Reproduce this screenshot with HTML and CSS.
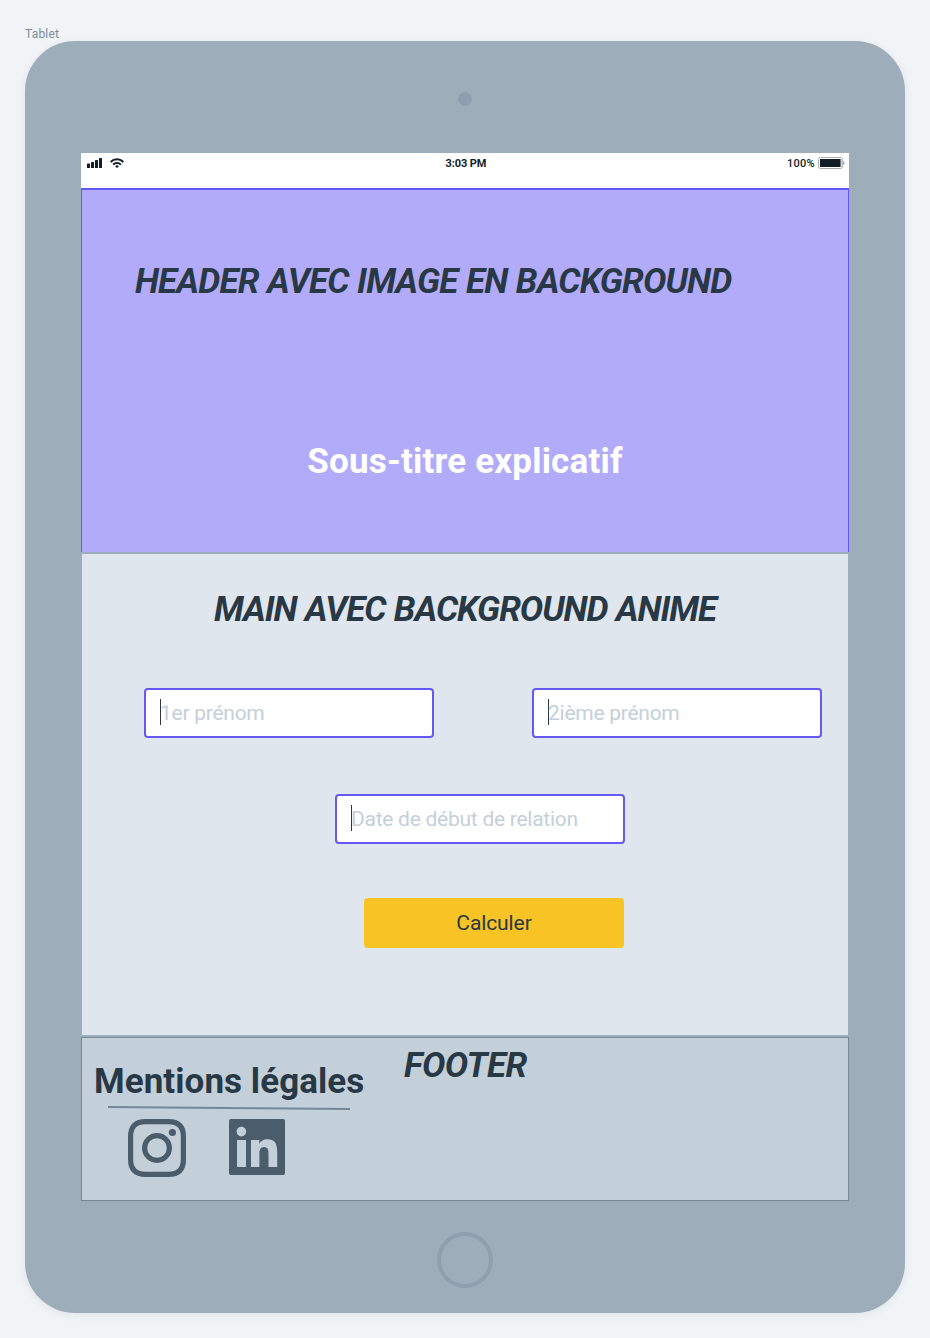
FILE: index.html
```html
<!DOCTYPE html>
<html lang="fr">
<head>
<meta charset="utf-8">
<title>Tablet</title>
<link rel="stylesheet" href="styles.css">
</head>
<body>
<div class="frame-label">Tablet</div>
<div class="tablet">
  <div class="bezel-top"><span class="camera"></span></div>
  <div class="screen">
    <div class="status">
      <div class="status-left">
        <svg width="16" height="10" viewBox="0 0 16 10" fill="#121c24"><rect x="0" y="5.5" width="3" height="4.5" rx=".6"/><rect x="4" y="4" width="3" height="6" rx=".6"/><rect x="8" y="2" width="3" height="8" rx=".6"/><rect x="12" y="0" width="3" height="10" rx=".6"/></svg>
        <svg class="wifi" width="14" height="10" viewBox="0 0 14 10" fill="none" stroke="#121c24" stroke-width="2"><path d="M.7 4a8.6 8.6 0 0 1 12.6 0"/><path d="M3.1 6.6a5.4 5.4 0 0 1 7.8 0"/><path d="M7 10 5.1 8.2a2.8 2.8 0 0 1 3.8 0z" fill="#121c24" stroke="none"/></svg>
      </div>
      <span class="time">3:03 PM</span>
      <div class="status-right">
        <span class="percent">100%</span>
        <svg width="27" height="12" viewBox="0 0 27 12"><rect x=".5" y=".5" width="24" height="11" rx="2" fill="#fff" stroke="#a9adb0"/><rect x="2" y="2" width="20.6" height="8" fill="#121c24"/><path d="M23.2 1.5h1.2v9h-1.2z" fill="#cfd1d2"/><path d="M25 3.7q1.7.8 1.7 2.3T25 8.3z" fill="#a9adb0"/></svg>
      </div>
    </div>
    <header class="hero">
      <h1 class="title hero-title">HEADER AVEC IMAGE EN BACKGROUND</h1>
      <p class="subtitle">Sous-titre explicatif</p>
    </header>
    <main class="main">
      <h2 class="title main-title">MAIN AVEC BACKGROUND ANIME</h2>
      <form class="form">
        <div class="names">
          <label class="field"><span class="caret"></span><input class="input" type="text" placeholder="1er prénom"></label>
          <label class="field"><span class="caret"></span><input class="input" type="text" placeholder="2ième prénom"></label>
        </div>
        <label class="field date"><span class="caret"></span><input class="input" type="text" placeholder="Date de début de relation"></label>
        <button class="button" type="button">Calculer</button>
      </form>
    </main>
    <footer class="footer">
      <div class="legal">
        <p class="legal-title">Mentions légales</p>
        <svg class="rule" width="242" height="4" viewBox="0 0 242 4"><path d="M0 1 242 3" stroke="#758897" stroke-width="2"/></svg>
        <div class="social">
          <svg width="58" height="58" viewBox="0 0 58 58" fill="none" stroke="#4b5d6b"><path d="M17.5 2.6h23C50.500 2.600 55.400 7.500 55.400 17.500v23c0 10-4.900 14.900-14.900 14.900h-23c-10 0-14.900-4.900-14.900-14.900v-23C2.600 7.500 7.500 2.600 17.500 2.600z" stroke-width="5.200"/><circle cx="29" cy="29" r="12.400" stroke-width="5.200"/><circle cx="44.400" cy="13.500" r="3.600" fill="#4b5d6b" stroke="none"/></svg>
          <svg width="56" height="56" viewBox="0 0 56 56"><rect width="56" height="56" rx="2" fill="#4b5d6b"/><g fill="#c4d0d9"><circle cx="12.400" cy="12.600" r="4.800"/><path d="M8 21h9v27H8z"/><path d="M22 21h8.300v3.700c1.300-2.400 4.200-4.400 8.100-4.400 8.200 0 9.800 5.300 9.800 12.800V48h-8.700V34.900c0-3.300-.3-7-4.300-7-4.100 0-4.800 3.300-4.800 7V48H22z"/></g></svg>
        </div>
      </div>
      <h2 class="title footer-title">FOOTER</h2>
    </footer>
  </div>
  <div class="bezel-bottom"><span class="home"></span></div>
</div>
</body>
</html>
```

FILE: styles.css
```css
* { box-sizing: border-box; }
body { margin: 0; padding: 26px 25px 25px; background: #f0f4f7; color: #293845; font-family: Roboto, "Liberation Sans", sans-serif; }
h1, h2, p { margin: 0; }
svg { display: block; flex: none; }
.frame-label { height: 15px; padding-top: 1px; font-size: 12px; line-height: 15px; letter-spacing: .2px; color: #7b8c9b; }
.tablet { width: 880px; height: 1272px; padding: 0 56px; border-radius: 50px; background: #9eadba; box-shadow: 0 2px 8px rgba(41, 56, 69, .08); }
.bezel-top { height: 112px; display: flex; justify-content: center; padding-top: 51px; }
.camera { width: 14px; height: 14px; border-radius: 50%; background: #8f9fae; }
.screen { height: 1048px; }
.status { height: 35px; padding: 4px 4px 0 6px; display: grid; grid-template-columns: 1fr auto 1fr; align-items: start; background: #fff; color: #121c24; font-size: 11px; line-height: 12px; font-weight: 500; }
.status-left { display: flex; gap: 7px; padding-top: 1px; }
.time { padding-top: 1px; font-weight: 700; letter-spacing: -.1px; }
.status-right { display: flex; justify-content: flex-end; gap: 3px; }
.percent { padding-top: 1px; letter-spacing: .3px; }
.title { font-size: 35px; line-height: 40px; font-weight: 700; font-style: italic; white-space: nowrap; }
.hero { height: 364px; padding-top: 72px; border: 1px solid #6558f5; border-width: 2px 1px 0; background: #b2abfa; }
.hero-title { padding-left: 53px; letter-spacing: -.87px; word-spacing: .8px; }
.subtitle { margin-top: 140px; text-align: center; color: #fff; font-size: 35px; line-height: 40px; font-weight: 700; letter-spacing: .2px; }
.main { height: 485px; padding-top: 36px; border: 1px solid #9eadba; border-width: 2px 1px; background: #dfe6ee; }
.main-title { text-align: center; letter-spacing: -1.06px; word-spacing: .8px; }
.form { display: flex; flex-direction: column; align-items: flex-start; margin-top: 58px; }
.names { display: flex; gap: 98px; padding-left: 62px; }
.field { display: flex; align-items: flex-start; width: 290px; height: 50px; padding: 9px 14px 0; border: 2px solid #6558f5; border-radius: 4px; background: #fff; }
.caret { flex: none; width: 1px; height: 26px; background: #293845; }
.input { width: 100%; height: 28px; margin-left: -1px; padding: 0; border: 0; outline: 0; background: none; font: 400 21px/28px Roboto, sans-serif; letter-spacing: -.26px; color: #293845; }
.input::placeholder { color: #c4d0d9; opacity: 1; }
.date { margin: 56px 0 0 253px; }
.button { width: 260px; height: 50px; margin: 54px 0 0 282px; padding: 0; border: 0; border-radius: 4px; background: #f8c325; color: #293845; font: 400 21px/50px Roboto, sans-serif; letter-spacing: -.1px; }
.footer { height: 164px; display: flex; border: 1px solid #758897; background: #c4d0d9; }
.legal { width: 322px; padding: 24px 0 0 12px; }
.legal-title { font-size: 35px; line-height: 40px; font-weight: 700; letter-spacing: .06px; white-space: nowrap; }
.rule { margin: 4px 0 0 14px; }
.social { display: flex; gap: 43px; margin: 9px 0 0 34px; }
.footer-title { padding-top: 8px; letter-spacing: -.6px; }
.bezel-bottom { height: 112px; display: flex; justify-content: center; padding-top: 31px; }
.home { width: 56px; height: 56px; border: 4px solid #8f9fae; border-radius: 50%; }
```
